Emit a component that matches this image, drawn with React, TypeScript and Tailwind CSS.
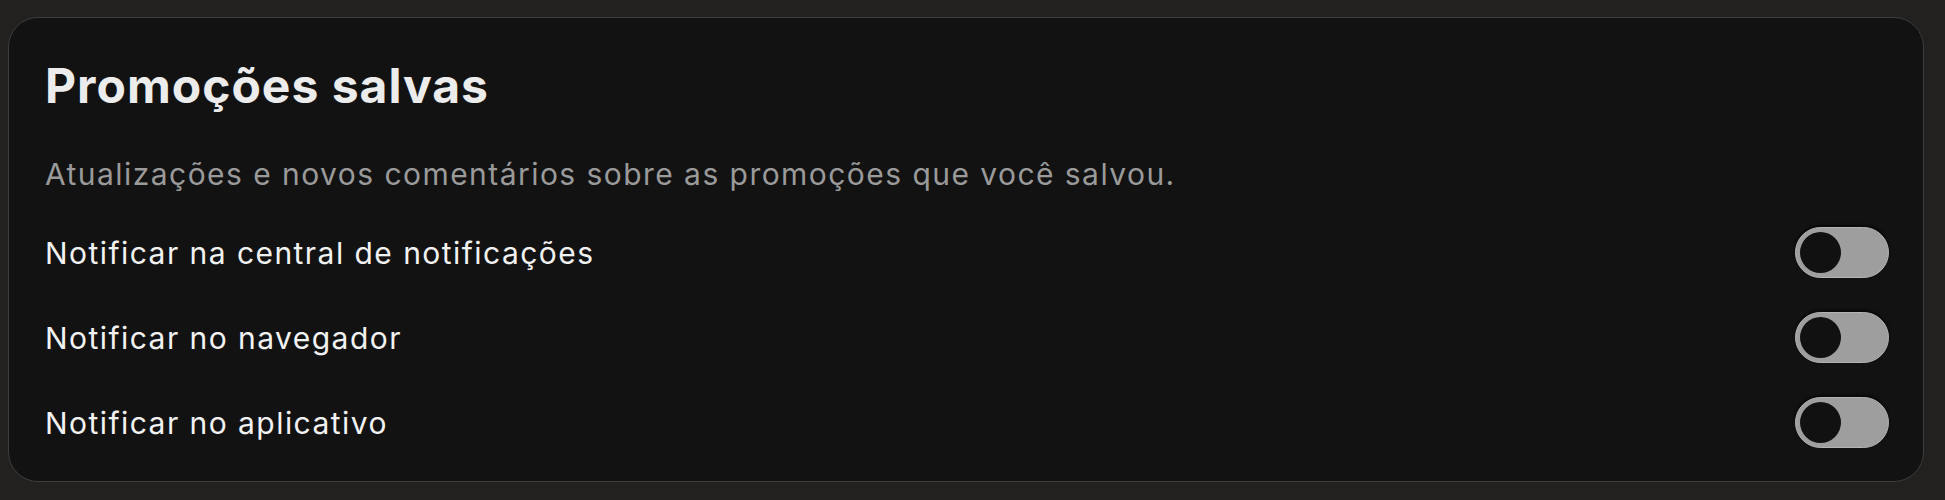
import { useState } from "react";

const options = [
  { id: "central", label: "Notificar na central de notificações" },
  { id: "browser", label: "Notificar no navegador" },
  { id: "app", label: "Notificar no aplicativo" },
];

const Toggle = ({ on, onChange }: { on: boolean; onChange: () => void }) => (
  <button
    onClick={onChange}
    className={`flex items-center w-[94px] h-[51px] rounded-full px-[4px] border border-[#b4b4b4] shadow-[0_-2px_3px_rgba(0,0,0,0.6)] ${on ? "bg-[#e0e0e0] justify-end" : "bg-[#9e9e9e] justify-start"}`}
  >
    <span className="block w-[41px] h-[41px] rounded-full bg-[#111111]" />
  </button>
);

export default function App() {
  const [settings, setSettings] = useState<Record<string, boolean>>({
    central: false,
    browser: false,
    app: false,
  });

  return (
    <div className="min-h-[500px] bg-[#22211f] pt-[17px] pb-[18px] pl-[8px] pr-[21px]" style={{ fontFamily: "Inter, 'Noto Sans', sans-serif" }}>
      <div className="bg-[#121212] border border-[#3c3c3c] rounded-[30px] pl-[36px] pr-[34px] pt-[39px] pb-[16px]">
        <h2 className="text-[48px] leading-[58px] font-bold tracking-[1px] text-[#ececec]">Promoções salvas</h2>
        <p className="mt-[39px] text-[30px] leading-[40px] tracking-[1.45px] text-[#9a9a9a]">
          Atualizações e novos comentários sobre as promoções que você salvou.
        </p>
        <div className="mt-[16px] flex flex-col">
          {options.map((o) => (
            <div key={o.id} className="flex items-center justify-between h-[85px]">
              <span className="text-[30px] leading-[40px] tracking-[1.45px] text-[#f2f2f2]">{o.label}</span>
              <Toggle on={settings[o.id]} onChange={() => setSettings((prev) => ({ ...prev, [o.id]: !prev[o.id] }))} />
            </div>
          ))}
        </div>
      </div>
    </div>
  );
}
